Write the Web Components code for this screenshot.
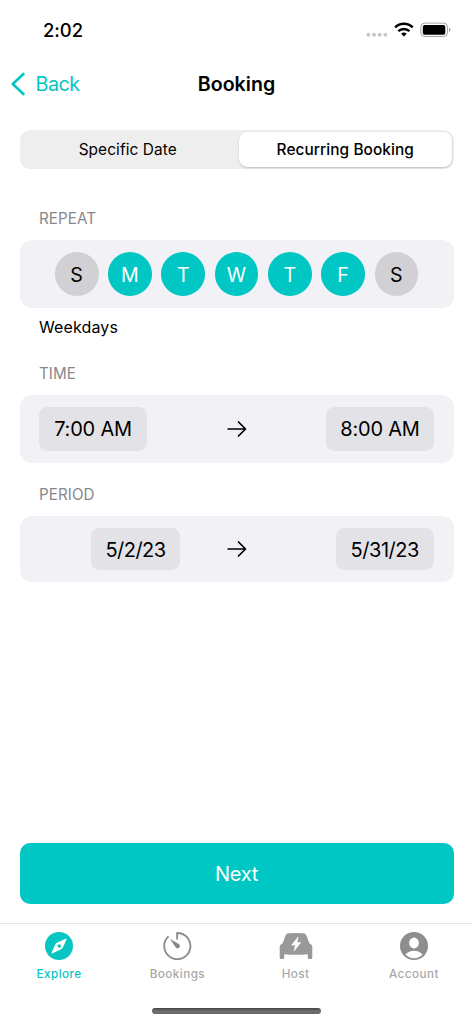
<!DOCTYPE html>
<html lang="en">
<head>
<meta charset="utf-8">
<title>Booking</title>
<style>
html,body{margin:0;padding:0;background:#fff}
body{font-family:Inter,"Liberation Sans",sans-serif;color:#000;width:473px;height:1024px;overflow:hidden}
</style>
</head>
<body>
<booking-app></booking-app>
<script>
function define(name, html) {
  const t = document.createElement('template');
  t.innerHTML = html;
  customElements.define(name, class extends HTMLElement {
    constructor() {
      super();
      this.attachShadow({ mode: 'open' }).appendChild(t.content.cloneNode(true));
    }
  });
}

define('status-bar', `
<style>
:host{display:flex;align-items:center;justify-content:space-between;height:60px;padding:0 22px 0 43px;box-sizing:border-box}
.time{font-size:18.4px;font-weight:500;line-height:24px;letter-spacing:-.05px}
svg{display:block}
</style>
<span class="time">2:02</span>
<svg width="86" height="20" viewBox="365 20 86 20">
  <g fill="#c8c8c8"><circle cx="368.5" cy="34.8" r="2"/><circle cx="374" cy="34.8" r="2"/><circle cx="379.7" cy="34.8" r="2"/><circle cx="385.4" cy="34.8" r="2"/></g>
  <g fill="none" stroke="#000" stroke-width="2.5"><path d="M395.1 27.4a12.6 12.6 0 0 1 17.6 0"/><path d="M398.3 31.1a8.2 8.2 0 0 1 11.2 0"/></g>
  <path d="M401.1 33.8a4.2 4.2 0 0 1 5.6 0L403.9 36.6z"/>
  <rect x="420.8" y="23.1" width="26.700" height="13.4" rx="4" fill="none" stroke="#a3a3a3"/>
  <rect x="422.8" y="25.1" width="22.5" height="9.6" rx="1.8"/>
  <path d="M449 27.8c2 .8 2 3.2 0 4z" fill="#999"/>
</svg>`);

define('nav-bar', `
<style>
:host{display:grid;grid-template-columns:1fr auto 1fr;align-items:center;height:48px;padding:0 10px}
.back{display:flex;align-items:center;gap:9.5px;color:#06c5c2;font-size:19.8px;letter-spacing:-.5px}
.title{font-size:19.6px;font-weight:600;letter-spacing:.02px}
svg{display:block}
</style>
<span class="back"><svg width="16" height="24" viewBox="0 0 16 24"><path d="M13.4 2 2.8 12l10.6 10" fill="none" stroke="currentColor" stroke-width="2.7" stroke-linecap="round" stroke-linejoin="round"/></svg><slot name="back"></slot></span>
<span class="title"><slot></slot></span>`);

define('segmented-control', `
<style>
:host{display:flex;box-sizing:border-box;height:38.5px;margin:22px 19.5px 0;padding:2px;border-radius:10px;background:#eee}
::slotted(span){display:flex;flex:1;align-items:center;justify-content:center;box-sizing:border-box;font-size:15.4px;font-weight:500;letter-spacing:.08px;border-radius:8.5px}
::slotted(span:not([selected])){padding-right:5px;font-weight:400;letter-spacing:.1px}
::slotted([selected]){flex:0 0 212.5px;background:#fff;box-shadow:0 1px 2px rgba(0,0,0,.2)}
</style><slot></slot>`);

define('form-section', `
<style>
:host{display:block;padding:0 19.5px}
.label{height:20px;line-height:20px;margin-left:19.5px;font-size:15.2px;color:#88888c;letter-spacing:.05px;transform:translateY(1px)}
.card{box-sizing:border-box;display:flex;align-items:center;height:var(--card-height,68px);margin-top:12px;padding:0 19.5px;border-radius:12px;background:#f2f1f6}
.note{display:block;height:20px;line-height:20px;margin:9.5px 0 0 19.5px;font-size:16px;letter-spacing:.12px;transform:translateY(-1px)}
</style>
<div class="label"><slot name="label"></slot></div>
<div class="card"><slot></slot></div>
<span class="note"><slot name="note"></slot></span>`);

define('day-picker', `
<style>
:host{display:flex;flex:1;justify-content:center;gap:9.6px}
::slotted(span){display:flex;align-items:center;justify-content:center;width:43.7px;height:43.7px;box-sizing:border-box;padding-top:1px;border-radius:50%;background:#d1d0d5;font-size:19.6px}
::slotted([on]){background:#00c7c4;color:#fff}
</style><slot></slot>`);

define('range-row', `
<style>
:host{display:grid;grid-template-columns:1fr 20px 1fr;align-items:center;flex:1}
::slotted(span){display:flex;align-items:center;justify-content:center;box-sizing:border-box;width:var(--w);height:var(--field-height,43.5px);padding-top:1px;border-radius:8.5px;background:#e3e2e7;font-size:20px;letter-spacing:var(--ls,-.2px)}
.from{display:flex;justify-content:var(--from-align,flex-start);padding-right:var(--from-gap,0)}
.to{display:flex;justify-content:flex-end}
svg{display:block}
</style>
<div class="from"><slot name="from"></slot></div>
<svg width="20" height="18" viewBox="0 0 20 18"><path d="M1.2 9h17M11.5 2l7 7-7 7" fill="none" stroke="#000" stroke-width="1.7" stroke-linecap="round" stroke-linejoin="round"/></svg>
<div class="to"><slot name="to"></slot></div>`);

define('primary-button', `
<style>
:host{display:flex;align-items:center;justify-content:center;box-sizing:border-box;height:60.5px;padding-top:1px;margin:auto 19.5px 19.5px;border-radius:10px;background:#00c7c4;color:#fff;font-size:20px;letter-spacing:-.25px}
</style><slot></slot>`);

define('tab-item', `
<style>
:host{display:flex;flex-direction:column;align-items:center;color:#999}
:host([active]){color:#06c5c2}
.icon{height:28px;display:block}
.text{margin-top:6px;line-height:16px;font-size:11.7px;font-weight:500;letter-spacing:.45px;color:#a8a8a8}
:host([active]) .text{color:#06c5c2}
</style><span class="icon"><slot name="icon"></slot></span><span class="text"><slot></slot></span>`);

define('tab-bar', `
<style>
:host{display:block;height:101px;box-sizing:border-box;border-top:1.5px solid #e6e6e6}
.tabs{display:grid;grid-template-columns:repeat(4,1fr);height:84px;padding-top:8px;box-sizing:border-box}
.home{width:168.5px;height:6px;border-radius:3px;margin:0 auto;background:linear-gradient(#444,#707070 55%,#666)}
svg{display:block}
</style>
<div class="tabs">
<tab-item active><svg slot="icon" width="34" height="28" viewBox="0 0 34 28"><circle cx="17" cy="14" r="14" fill="currentColor"/><path d="M24.2 7 20 16.2 9.9 21.2 14.2 11.6z" fill="#fff" stroke="#fff" stroke-linejoin="round"/><circle cx="17.2" cy="14" r="1.8" fill="currentColor"/></svg>Explore</tab-item>
<tab-item><svg slot="icon" width="34" height="28" viewBox="0 0 34 28"><path d="M17.1 6.8V1A13.1 13.1 0 1 1 8 4.9" fill="none" stroke="#8e8e8e" stroke-width="1.9" stroke-linecap="round" stroke-linejoin="round"/><path d="M10.9 7.8 19 12.5a2.1 2.1 0 0 1-2.7 3.2z" fill="#858585" stroke="#858585" stroke-width=".7" stroke-linejoin="round"/></svg>Bookings</tab-item>
<tab-item><svg slot="icon" width="34" height="28" viewBox="0 0 34 28"><path d="M9.4 1.3Q17 .7 24.6 1.3 26.9 1.500 27.800 4.200L30.200 11 32.600 12.900Q33.300 13.500 33.300 14.500V25.700Q33.300 26.900 32.100 26.900H30Q28.800 26.900 28.800 25.700V22.300Q17 23.300 5.200 22.300V25.700Q5.200 26.900 4 26.900H1.900Q.7 26.900 .7 25.700V14.500Q.7 13.500 1.400 12.900L3.800 11 6.200 4.200Q7.100 1.500 9.400 1.300Z" fill="currentColor"/><path d="M19.200 4.900 12.700 13.100h3.700l-1.300 5.900 6.600-8.400h-3.800z" fill="#fff" stroke="#fff" stroke-width=".6" stroke-linejoin="round"/></svg>Host</tab-item>
<tab-item><svg slot="icon" width="34" height="28" viewBox="0 0 34 28"><circle cx="17" cy="14" r="14" fill="#8e8e8e"/><ellipse cx="17" cy="11" rx="4.9" ry="5.4" fill="#fff"/><path d="M8.5 22.6Q11.5 18.7 17 18.7T25.5 22.6Q22 26.2 17 26.2T8.5 22.6Z" fill="#fff"/></svg>Account</tab-item>
</div>
<div class="home"></div>`);

define('booking-app', `
<style>
:host{display:flex;flex-direction:column;width:473px;height:1024px;background:#fff}
.repeat{margin-top:39.5px}
.time{margin-top:25.5px;--card-height:67.5px}
.period{margin-top:-8px;--card-height:66px;--field-height:42px;--from-align:flex-end;--from-gap:46.5px}
</style>
<status-bar></status-bar>
<nav-bar><span slot="back">Back</span>Booking</nav-bar>
<segmented-control><span>Specific Date</span><span selected>Recurring Booking</span></segmented-control>
<form-section class="repeat"><span slot="label">REPEAT</span>
<day-picker><span>S</span><span on>M</span><span on>T</span><span on>W</span><span on>T</span><span on>F</span><span>S</span></day-picker>
<span slot="note">Weekdays</span></form-section>
<form-section class="time"><span slot="label">TIME</span>
<range-row><span slot="from" style="--w:108px">7:00 AM</span><span slot="to" style="--w:108px">8:00 AM</span></range-row></form-section>
<form-section class="period"><span slot="label">PERIOD</span>
<range-row><span slot="from" style="--w:89px;--ls:-.55px">5/2/23</span><span slot="to" style="--w:98.5px;--ls:-.45px">5/31/23</span></range-row></form-section>
<primary-button>Next</primary-button>
<tab-bar></tab-bar>`);
</script>
</body>
</html>
